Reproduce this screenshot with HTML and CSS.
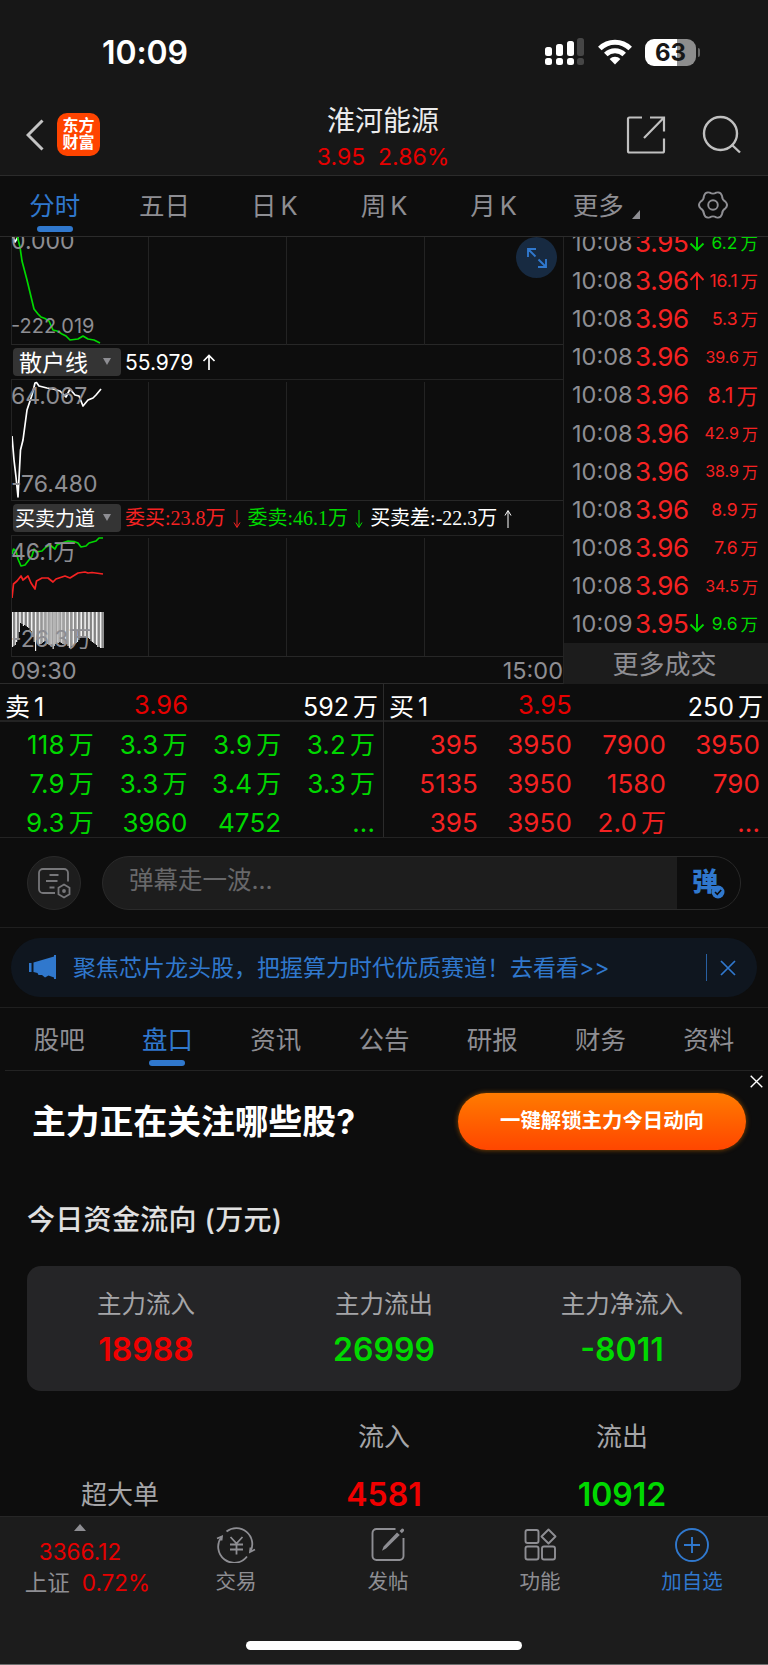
FILE: index.html
```html
<!DOCTYPE html>
<html lang="zh-CN">
<head>
  <meta charset="UTF-8">
  <meta name="viewport" content="width=device-width, initial-scale=1.0">
  <title>淮河能源</title>
  <link rel="stylesheet" href="styles.css">
</head>
<body>
  <!-- 状态栏 -->
  <div class="status">
    <span class="time">10:09</span>
    <svg class="signal" width="40" height="28" viewBox="0 0 40 28">
      <g fill="#fff">
        <rect x="0" y="9" width="7" height="9" rx="2.5"/><rect x="11" y="6" width="7" height="12" rx="2.5"/><rect x="22" y="3" width="7" height="15" rx="2.5"/>
        <rect x="0" y="20" width="7" height="7" rx="2.5"/><rect x="11" y="20" width="7" height="7" rx="2.5"/><rect x="22" y="20" width="7" height="7" rx="2.5"/>
      </g>
      <g fill="#464646"><rect x="32" y="0" width="7" height="18" rx="2.5"/><rect x="32" y="20" width="7" height="7" rx="2.5"/></g>
    </svg>
    <svg class="wifi" width="34" height="26" viewBox="0 0 34 26">
      <g fill="none" stroke="#fff" stroke-width="5">
        <path d="M1.8 9.5a21.5 21.5 0 0 1 30.4 0"/>
        <path d="M7.8 15.6a13 13 0 0 1 18.4 0"/>
      </g>
      <path d="M17 25.5l-5.4-5.6a7.6 7.6 0 0 1 10.8 0z" fill="#fff"/>
    </svg>
    <div class="battery">63</div>
  </div>

  <!-- 顶部标题 -->
  <header class="header">
    <svg class="back" width="18" height="32" viewBox="0 0 18 32"><path d="M16.500 1.500L2 16l14.500 14.500" fill="none" stroke="#c4c4c4" stroke-width="3"/></svg>
    <div class="logo">东方<br>财富</div>
    <div class="stock">
      <h1>淮河能源</h1>
      <p>3.95&nbsp; 2.86%</p>
    </div>
    <svg class="share" width="40" height="40" viewBox="0 0 40 40">
      <g fill="none" stroke="#c0c0c0" stroke-width="2.2">
        <path d="M16 2.500H3.500a1.500 1.500 0 0 0-1.500 1.500V36a1.500 1.500 0 0 0 1.500 1.500H36.500a1.500 1.500 0 0 0 1.500-1.500V23.500"/>
        <path d="M24 2.500h14v14M38 2.500L18 23"/>
      </g>
    </svg>
    <svg class="search" width="40" height="40" viewBox="0 0 40 40">
      <g fill="none" stroke="#c0c0c0" stroke-width="2.4"><circle cx="18.500" cy="18.500" r="16.500"/><path d="M29.500 29.500L38 37.500"/></g>
    </svg>
  </header>

  <!-- 周期切换 -->
  <nav class="tabs">
    <a class="active">分时</a>
    <a>五日</a>
    <a>日<i>K</i></a>
    <a>周<i>K</i></a>
    <a>月<i>K</i></a>
    <a class="more">更多<span class="corner"></span></a>
    <a>
      <svg width="30" height="30" viewBox="0 0 30 30"><g fill="none" stroke="#8e8e93" stroke-width="1.9"><path d="M27.400 11.700Q30.600 15 27.400 18.300Q24 20.200 24.050 24.050Q22.800 28.500 18.300 27.400Q15 25.400 11.700 27.400Q7.200 28.500 5.950 24.050Q6 20.200 2.600 18.300Q-.6 15 2.600 11.700Q6 9.800 5.950 5.950Q7.200 1.500 11.700 2.600Q15 4.600 18.300 2.600Q22.800 1.500 24.050 5.950Q24 9.800 27.400 11.700Z"/><circle cx="15" cy="15" r="4.800"/></g></svg>
    </a>
  </nav>

  <!-- 分时图和成交明细 -->
  <section class="quote">
    <div class="charts">
      <div class="panel p1">
        <svg width="551" height="108" viewBox="0 0 551 108">
          <path class="grid" d="M136.500 0V108M274.500 0V108M412.500 0V108"/>
          <path d="M1 0L3 5L6 0" class="line white"/>
          <path d="M5.500 0L8 10L10 24L15 43L22 72L26 77L29 80L33 81.500L37 84L41 93L45 94L50 97L54 99L58 103L66 102L71 99L76 102L82 103L88 106" class="line green"/>
        </svg>
        <span class="top">0.000</span>
        <span class="bottom">-222.019</span>
      </div>
      <div class="indicator">
        <b class="wide">散户线<i></i></b>
        <span class="val">55.979 <svg width="14" height="17" viewBox="0 0 14 17"><path d="M7 16V2M1.500 7L7 1.500L12.500 7" fill="none" stroke="#fff" stroke-width="1.700"/></svg></span>
      </div>
      <div class="panel p2">
        <svg width="551" height="120" viewBox="0 0 551 120">
          <path class="grid" d="M136.500 2V120M274.500 2V120M412.500 2V120"/>
          <path d="M0 56L2 80L4 97L6 117L8.500 70L11 60L15 30L20 15L23 3L24.500 2.500L27 6L35 8L41 9L48 11L54 17L58 9L63 15L67 16L71 26L76 20L81 18L84 15L89 9" class="line white"/>
        </svg>
        <span class="top">64.067</span>
        <span class="bottom">-76.480</span>
      </div>
      <div class="indicator serif">
        <b>买卖力道<i></i></b>
        <span class="red">委买:23.8万<svg width="8" height="20" viewBox="0 0 8 20"><path d="M4 1V18M1 13.500L4 18.500L7 13.500" fill="none" stroke="currentColor"/></svg></span>
        <span class="green">委卖:46.1万<svg width="8" height="20" viewBox="0 0 8 20"><path d="M4 1V18M1 13.500L4 18.500L7 13.500" fill="none" stroke="currentColor"/></svg></span>
        <span class="white">买卖差:-22.3万<svg width="8" height="20" viewBox="0 0 8 20"><path d="M4 19V2M1 6.500L4 1.500L7 6.500" fill="none" stroke="currentColor"/></svg></span>
      </div>
      <div class="panel p3">
        <svg id="force" width="551" height="120" viewBox="0 0 551 120">
          <path class="grid" d="M136.500 2V120M274.500 2V120M412.500 2V120"/>
          <path d="M0 18L1.500 13L4 15L6 23L9 30L13 29L20 20L22 13L24 16L30 15L34 11L38 9L43 13L45 9L50 7L56 5L62 5.500L66 7L69 11L74 10L77 7L84 5L87 2L91 2" class="line green"/>
          <path d="M0 62L1.500 48L5 45L9 40L11 44L16 40L19 47L23 53L24.500 45L30 42L36 42L41 46L44 43L53 40L58 42L66 37L73 36L76 37L80 36.500L91 38" class="line red"/>
        </svg>
        <span class="top">46.1万</span>
        <span class="bottom">-26.3万</span>
      </div>
      <div class="axis"><span>09:30</span><span>15:00</span></div>
    </div>
    <div class="trades">
      <ul id="ticks"></ul>
      <a class="more-trades">更多成交</a>
    </div>
    <div class="expand">
      <svg width="22" height="22" viewBox="0 0 22 22"><path d="M2 10V2H10M2 2L9.500 9.500M20 12V20H12M20 20L12.500 12.500" fill="none" stroke="#3078cd" stroke-width="1.900"/></svg>
    </div>
  </section>

  <!-- 买卖队列 -->
  <section class="book">
    <div class="side">
      <div class="level"><span>卖<i>1</i></span><span class="price">3.96</span><span>592<i>万</i></span></div>
      <div class="queue green">
        <span>118<i>万</i></span><span>3.3<i>万</i></span><span>3.9<i>万</i></span><span>3.2<i>万</i></span>
        <span>7.9<i>万</i></span><span>3.3<i>万</i></span><span>3.4<i>万</i></span><span>3.3<i>万</i></span>
        <span>9.3<i>万</i></span><span>3960</span><span>4752</span><span>...</span>
      </div>
    </div>
    <div class="side">
      <div class="level"><span>买<i>1</i></span><span class="price">3.95</span><span>250<i>万</i></span></div>
      <div class="queue red">
        <span>395</span><span>3950</span><span>7900</span><span>3950</span>
        <span>5135</span><span>3950</span><span>1580</span><span>790</span>
        <span>395</span><span>3950</span><span>2.0<i>万</i></span><span>...</span>
      </div>
    </div>
  </section>

  <!-- 弹幕 -->
  <section class="danmu">
    <div class="danmu-set">
      <svg width="34" height="32" viewBox="0 0 34 32">
        <g fill="none" stroke="#77777a" stroke-width="1.8">
          <path d="M18 26H6a4 4 0 0 1-4-4V6a4 4 0 0 1 4-4h21a4 4 0 0 1 4 4v8.500"/>
          <path d="M12.500 8h9M9 14h11.500M12.500 20.500h5"/>
          <path d="M27 17.500l5.500 3.200v6.600L27 30.500l-5.500-3.200v-6.600z"/><circle cx="27" cy="24" r="1"/>
        </g>
      </svg>
    </div>
    <div class="danmu-input">
      <span>弹幕走一波...</span>
      <div class="danmu-btn">弹<svg width="14" height="14" viewBox="0 0 14 14"><circle cx="7" cy="7" r="6.500" fill="#3078cd"/><path d="M4 7l2.300 2.300L10.200 5" fill="none" stroke="#0d0d0d" stroke-width="1.600"/></svg></div>
    </div>
  </section>

  <!-- 公告条 -->
  <section class="notice">
    <div class="notice-bar">
      <svg width="28" height="25" viewBox="0 0 28 25" fill="#3078cd"><path d="M1 8h2.500v9H1zM5.500 7.500L26 1.500V0h2v24h-2v-1.500L20.500 20.500 17 22.500 14 20H10.500l-1-2L5.500 17z"/></svg>
      <p>聚焦芯片龙头股，把握算力时代优质赛道！去看看&gt;&gt;</p>
      <span class="split"></span>
      <svg width="16" height="16" viewBox="0 0 16 16"><path d="M1 1l14 14M15 1L1 15" stroke="#3078cd" stroke-width="1.700"/></svg>
    </div>
  </section>

  <nav class="tabs sub">
    <a>股吧</a>
    <a class="active">盘口</a>
    <a>资讯</a>
    <a>公告</a>
    <a>研报</a>
    <a>财务</a>
    <a>资料</a>
  </nav>

  <!-- 广告 -->
  <section class="ad">
    <h2>主力正在关注哪些股?</h2>
    <a class="ad-btn">一键解锁主力今日动向</a>
    <div class="ad-close"><svg width="13" height="13" viewBox="0 0 13 13"><path d="M.7.7l11.600 11.600M12.300.7L.7 12.300" stroke="#fff" stroke-width="1.400"/></svg></div>
  </section>

  <!-- 资金流向 -->
  <section class="flow">
    <h3>今日资金流向 (万元)</h3>
    <div class="card">
      <div><p>主力流入</p><strong class="up">18988</strong></div>
      <div><p>主力流出</p><strong class="down">26999</strong></div>
      <div><p>主力净流入</p><strong class="down">-8011</strong></div>
    </div>
    <div class="detail">
      <span></span><span>流入</span><span>流出</span>
      <span class="name">超大单</span><strong class="up">4581</strong><strong class="down">10912</strong>
    </div>
  </section>

  <!-- 底部导航 -->
  <footer class="footer">
    <div class="index">
      <span class="tri"></span>
      <span class="num">3366.12</span>
      <span class="name">上证 <em>0.72%</em></span>
    </div>
    <a>
      <svg width="40" height="36" viewBox="0 0 40 36"><g fill="none" stroke="#8e8e93" stroke-width="1.800"><path d="M10.500 4.500A16 16 0 0 1 34.500 24.500M31 29.500A16 16 0 0 1 5.500 10"/><path d="M1 11.500l5-2-.5 4M39 22.500l-5 2.500.5-4.500M14.500 10l6 6.500 6-6.500M20.500 16.500v11M14 17.500h13M14 22.500h13"/></g></svg>
      交易
    </a>
    <a>
      <svg width="40" height="36" viewBox="0 0 40 36"><path d="M27.500 2H8.500a4 4 0 0 0-4 4v23a4 4 0 0 0 4 4h23a4 4 0 0 0 4-4V11" fill="none" stroke="#8e8e93" stroke-width="1.900"/><path d="M29 5.500l2.800 2.600L18 21.500l-4 2.300 1.600-4.300zM31.500 4l2.500-2.500q2.500 0 2 2.500l-2.200 2.300z" fill="#8e8e93"/></svg>
      发帖
    </a>
    <a>
      <svg width="40" height="36" viewBox="0 0 40 36"><g fill="none" stroke="#8e8e93" stroke-width="1.900"><rect x="5.500" y="3" width="13" height="13" rx="2"/><rect x="5.500" y="19.500" width="13" height="13" rx="2"/><rect x="22" y="19.500" width="13" height="13" rx="2"/><path d="M28.500 2.500l7 7-7 7-7-7z" stroke-linejoin="round"/></g></svg>
      功能
    </a>
    <a class="add">
      <svg width="40" height="36" viewBox="0 0 40 36"><g fill="none" stroke="#3078cd" stroke-width="1.900"><circle cx="20" cy="18" r="16"/><path d="M12 18h16M20 10v16"/></g></svg>
      加自选
    </a>
    <div class="home"></div>
  </footer>

  <script src="main.js"></script>
</body>
</html>
```
FILE: styles.css
```css
* {
  box-sizing: border-box;
}
body {
  margin: 0;
  width: 768px;
  height: 1665px;
  overflow: hidden;
  display: flex;
  flex-direction: column;
  background: #0d0d0d;
  color: #8e8e93;
  font-family: Inter, "Noto Sans CJK SC", sans-serif;
}
h1, h2, h3, p, ul {
  margin: 0;
  padding: 0;
  font-weight: 400;
  list-style: none;
}
i, em {
  font-style: normal;
}
svg {
  display: block;
  flex: none;
}
.red { color: #f52222; }
.green { color: #00d800; }
.white { color: #fff; }
.up { color: #f00000; }
.down { color: #00d800; }

/* 状态栏 */
.status {
  height: 104px;
  flex: none;
  display: flex;
  align-items: center;
  padding: 0 68px 0 102px;
  background: #171717;
}
.time {
  color: #fff;
  font-size: 32px;
  font-weight: 600;
  letter-spacing: -0.1px;
  margin-right: auto;
}
.wifi {
  margin: 0 13px 0 13px;
}
.battery {
  position: relative;
  width: 51px;
  height: 27px;
  margin-right: 4px;
  border-radius: 9px;
  background: linear-gradient(90deg, #fff 63%, #8d8d8d 63%);
  color: #171717;
  font-size: 24px;
  font-weight: 700;
  line-height: 27px;
  text-align: center;
}
.battery::after {
  content: "";
  position: absolute;
  right: -4px;
  top: 9px;
  width: 2.500px;
  height: 9px;
  border-radius: 0 3px 3px 0;
  background: #666;
}

/* 顶部标题 */
.header {
  position: relative;
  height: 72px;
  flex: none;
  display: flex;
  align-items: center;
  padding: 0 26px 10px;
  background: #171717;
  border-bottom: 1px solid #2b2b2b;
}
.back {
  margin-top: 1px;
}
.logo {
  width: 43px;
  height: 43px;
  margin-left: 13px;
  padding-top: 4px;
  border-radius: 10px;
  background: #ff4400;
  color: #fff;
  font-size: 16px;
  font-weight: 700;
  line-height: 17px;
  text-align: center;
}
.stock {
  flex: 1;
  padding-left: 40px;
  text-align: center;
}
.stock h1 {
  margin-top: 5px;
  color: #ebebeb;
  font-size: 28px;
  line-height: 40px;
}
.stock p {
  color: #e60000;
  font-size: 23px;
  line-height: 32px;
}
.share {
  margin-right: 36px;
}

/* 切换栏 */
.tabs {
  height: 61px;
  flex: none;
  display: flex;
  border-bottom: 1px solid #2b2b2b;
}
.tabs a {
  position: relative;
  flex: 0 0 calc(100% / 7);
  display: flex;
  justify-content: center;
  align-items: center;
  padding-bottom: 5px;
  font-size: 25.500px;
}
.tabs a i {
  margin-left: 4px;
  padding-top: 3px;
}
.tabs a.more {
  padding-right: 10px;
}
.tabs a svg {
  margin-top: 3px;
}
.tabs .active {
  color: #3078cd;
}
.tabs .active::after {
  content: "";
  position: absolute;
  left: 50%;
  bottom: 4px;
  width: 36px;
  height: 6px;
  margin-left: -18px;
  border-radius: 3px;
  background: #3078cd;
}
.corner {
  position: absolute;
  right: 18px;
  bottom: 17px;
  border-left: 8px solid transparent;
  border-bottom: 9px solid #8e8e93;
}

/* 分时图 */
.quote {
  position: relative;
  height: 447px;
  flex: none;
  display: flex;
  overflow: hidden;
}
.charts {
  width: 564px;
  padding-left: 11px;
  border-right: 1px solid #232323;
  border-bottom: 1px solid #2b2b2b;
}
.panel {
  position: relative;
  border-left: 1px solid #232323;
  border-bottom: 1px solid #272727;
  height: 121px;
}
.p1 {
  height: 108px;
}
.panel svg {
  position: relative;
}
.panel span {
  position: absolute;
  left: -1px;
  font-size: 23px;
  line-height: 24px;
}
.p1 .top { top: -8px; }
.p1 .bottom { top: 77px; font-size: 20px; }
.p2 .top { top: 4px; }
.p2 .bottom { top: 92px; }
.p3 .top { top: 4px; }
.p3 .bottom { top: 91px; }
.grid {
  fill: none;
  stroke: #232323;
  stroke-width: 1;
}
.line {
  fill: none;
  stroke: currentColor;
  stroke-width: 1.700;
  stroke-linejoin: round;
}
.indicator {
  height: 35px;
  display: flex;
  align-items: center;
  padding-left: 2px;
  border-bottom: 1px solid #232323;
  white-space: nowrap;
}
.indicator b {
  width: 108px;
  height: 28px;
  margin-right: 4px;
  display: flex;
  align-items: center;
  justify-content: space-between;
  padding: 0 10px 2px 2px;
  border-radius: 4px;
  background: #343434;
  color: #fff;
  font-size: 20px;
  font-weight: 400;
}
.indicator b.wide {
  padding-left: 6px;
  font-size: 23px;
}
.indicator b i {
  border: 4px solid transparent;
  border-top: 7px solid #8e8e93;
  border-bottom: 0;
}
.val {
  display: flex;
  align-items: center;
  gap: 9px;
  color: #fff;
  font-size: 21px;
}
.serif span {
  display: flex;
  align-items: center;
  padding-bottom: 3px;
  font-family: "Liberation Serif", "Noto Sans CJK SC", serif;
  font-size: 20px;
}
.serif span svg {
  margin: 4px 7px 0 7px;
}
.axis {
  display: flex;
  justify-content: space-between;
  font-size: 23.500px;
  line-height: 28px;
}

/* 放大按钮 */
.expand {
  position: absolute;
  left: 516px;
  top: 0;
  width: 41px;
  height: 41px;
  display: flex;
  align-items: center;
  justify-content: center;
  border-radius: 50%;
  background: #172a41;
}

/* 成交明细 */
.trades {
  flex: 1;
  display: flex;
  flex-direction: column;
}
.trades ul {
  height: 406px;
  display: flex;
  flex-direction: column;
  justify-content: flex-end;
}
.trades li {
  height: 38.180px;
  flex: none;
  display: flex;
  align-items: center;
  padding: 0 10px 0 8px;
}
.trades .t {
  width: 63px;
  font-size: 23.500px;
}
.trades .p {
  width: 54px;
  font-size: 26px;
  letter-spacing: -0.3px;
}
.trades .v {
  flex: 1;
  display: flex;
  justify-content: flex-end;
  align-items: center;
  font-size: 17.500px;
}
.trades .v i {
  margin-left: 3px;
}
.trades .v.s { font-size: 16px; }
.trades .v.l { font-size: 21.500px; }
.trades .arrow {
  margin-right: -16px;
}
.more-trades {
  flex: 1;
  background: #1c1c1c;
  font-size: 26px;
  line-height: 44px;
  padding-right: 3px;
  text-align: center;
}

/* 买卖队列 */
.book {
  height: 154px;
  flex: none;
  display: flex;
  font-size: 26px;
  border-bottom: 1px solid #232323;
}
.side {
  width: 384px;
}
.side:first-child {
  border-right: 1px solid #2b2b2b;
}
.side i {
  margin-left: 4px;
  font-size: 25px;
}
.level {
  height: 38px;
  display: flex;
  align-items: center;
  padding: 5px 5px 0;
  color: #fff;
  font-size: 25px;
  border-bottom: 2px solid #232323;
}
.level span:first-child {
  width: 129px;
}
.level span:last-child {
  flex: 1;
  text-align: right;
}
.level .price {
  color: #e60000;
  font-size: 25.500px;
}
.queue {
  display: grid;
  grid-template-columns: repeat(4, 1fr);
  grid-auto-rows: 39px;
  padding-top: 3px;
  padding-right: 8px;
  letter-spacing: 0.1px;
  line-height: 39px;
  text-align: right;
}

/* 弹幕 */
.danmu {
  height: 90px;
  flex: none;
  display: flex;
  align-items: center;
  justify-content: space-between;
  padding: 0 27px;
  border-bottom: 1px solid #1f1f1f;
}
.danmu-set {
  width: 54px;
  height: 54px;
  display: flex;
  align-items: center;
  justify-content: center;
  border-radius: 50%;
  border: 1px solid #2a2a2a;
  background: #1d1d1d;
}
.danmu-input {
  width: 639px;
  height: 54px;
  display: flex;
  align-items: center;
  overflow: hidden;
  border-radius: 27px;
  border: 1px solid #2a2a2a;
  background: #1d1d1d;
  color: #68686a;
  font-size: 24.500px;
}
.danmu-input span {
  flex: 1;
  padding: 0 0 8px 26px;
}
.danmu-btn {
  position: relative;
  width: 63px;
  height: 54px;
  padding-left: 15px;
  background: #0d0d0d;
  color: #3078cd;
  font-size: 26px;
  font-weight: 900;
  line-height: 52px;
}
.danmu-btn svg {
  position: absolute;
  left: 34px;
  top: 29px;
}

/* 公告条 */
.notice {
  height: 80px;
  flex: none;
  padding: 10px 11px;
  border-bottom: 1px solid #1f1f1f;
}
.notice-bar {
  height: 59px;
  display: flex;
  align-items: center;
  padding: 0 21px 0 17px;
  border-radius: 30px;
  background: #0f161f;
  color: #3078cd;
  font-size: 23px;
}
.notice-bar p {
  flex: 1;
  padding: 0 0 3px 17px;
  white-space: nowrap;
}
.split {
  width: 1.500px;
  height: 27px;
  margin-right: 13px;
  background: #2860a2;
}
.sub {
  height: 63px;
  margin: 0 5px;
  border-color: #232323;
}
.sub a {
  padding-bottom: 3px;
}

/* 广告 */
.ad {
  position: relative;
  height: 101px;
  flex: none;
  display: flex;
  justify-content: space-between;
  align-items: center;
  padding: 0 22px 0 32px;
}
.ad h2 {
  padding-bottom: 4px;
  color: #fff;
  font-size: 33.800px;
  font-weight: 700;
}
.ad-btn {
  width: 288px;
  height: 57px;
  border-radius: 29px;
  background: linear-gradient(#ff7b00, #ff4600);
  box-shadow: 0 0 5px #8a4a00;
  color: #fff;
  font-size: 20.400px;
  font-weight: 700;
  line-height: 55px;
  text-align: center;
}
.ad-close {
  position: absolute;
  right: 0;
  top: 0;
  padding: 4px 5px 15px 12px;
}

/* 资金流向 */
.flow {
  height: 344px;
  flex: none;
  padding: 27px 27px 0;
}
.flow h3 {
  color: #e0e0e0;
  font-size: 28px;
  font-weight: 500;
  letter-spacing: 0.3px;
  line-height: 42px;
}
.card {
  height: 125px;
  margin-top: 25px;
  padding-top: 20px;
  display: flex;
  border-radius: 14px;
  background: #252527;
  text-align: center;
}
.card div {
  flex: 1;
}
.card p {
  color: #a5a5a8;
  font-size: 24.500px;
  line-height: 36px;
}
.flow strong {
  font-size: 32px;
  font-weight: 600;
  line-height: 56px;
}
.detail {
  display: grid;
  grid-template-columns: repeat(3, 1fr);
  grid-auto-rows: 58px;
  padding-top: 17px;
  color: #a5a5a8;
  font-size: 26px;
  line-height: 57px;
  text-align: center;
}
.detail strong {
  line-height: 57px;
}
.detail .name {
  padding-right: 52px;
}

/* 底部导航 */
.footer {
  position: relative;
  flex: 1;
  display: flex;
  align-items: flex-start;
  background: #1c1c1c;
  border-top: 1px solid #262626;
  border-bottom: 1px solid #6e6e6e;
  font-size: 20.500px;
}
.index {
  width: 160px;
  padding-top: 7px;
  display: flex;
  flex-direction: column;
  align-items: center;
}
.tri {
  border: 6px solid transparent;
  border-top: 0;
  border-bottom: 7px solid #8e8e93;
}
.index .num {
  margin-top: 5px;
  color: #e60000;
  font-size: 22.500px;
  line-height: 31px;
}
.index .name {
  display: flex;
  gap: 12px;
  padding-left: 15px;
  font-size: 22.500px;
  line-height: 31px;
}
.index em {
  color: #e60000;
}
.footer a {
  width: 152px;
  padding-top: 10px;
  display: flex;
  flex-direction: column;
  align-items: center;
  line-height: 37px;
}
.footer .add {
  color: #3078cd;
}
.home {
  position: absolute;
  left: 246px;
  bottom: 14px;
  width: 276px;
  height: 9px;
  border-radius: 5px;
  background: #fff;
}
```
FILE: main.js
```js
// 成交明细：时间、价格、成交量（万）、方向、字号
const trades = [
  ['10:08', '3.95', '6.2', 'down', ''],
  ['10:08', '3.96', '16.1', 'up', ''],
  ['10:08', '3.96', '5.3', '', ''],
  ['10:08', '3.96', '39.6', '', 's'],
  ['10:08', '3.96', '8.1', '', 'l'],
  ['10:08', '3.96', '42.9', '', 's'],
  ['10:08', '3.96', '38.9', '', 's'],
  ['10:08', '3.96', '8.9', '', ''],
  ['10:08', '3.96', '7.6', '', ''],
  ['10:08', '3.96', '34.5', '', 's'],
  ['10:09', '3.95', '9.6', 'down', '']
];
const arrows = {
  up: '<path d="M8 19V2M1.500 9L8 2L14.500 9"/>',
  down: '<path d="M8 0V17M1.500 10.500L8 17L14.500 10.500"/>'
};

document.getElementById('ticks').innerHTML = trades.map(([time, price, vol, dir, size]) => {
  const color = dir === 'down' ? 'green' : 'red';
  const arrow = dir
    ? `<svg class="arrow ${color}" width="16" height="19" viewBox="0 0 16 19" fill="none" stroke="currentColor" stroke-width="1.9">${arrows[dir]}</svg>`
    : '';
  return `<li><span class="t">${time}</span><span class="p red">${price}</span>${arrow}<span class="v ${color} ${size}">${vol}<i>万</i></span></li>`;
}).join('');

// 买卖力道柱状图
const depth = [35, 34, 33, 30, 26, 20, 11, 12, 14, 13, 14, 15, 16, 18, 19, 25, 30, 39, 28, 32, 32, 32, 31, 30, 29, 30, 32, 33, 34, 33, 37, 34, 32, 31, 31, 30, 31, 32, 32, 33, 32, 34, 36, 36, 34, 33, 32, 31, 30, 28, 26, 25, 24, 25, 24, 25, 26, 27, 29, 30, 31, 32, 33, 35, 35, 36, 36, 36];
let bars = '';
depth.forEach((h, i) => {
  const color = i % 3 === 1 ? '#b4b4b4' : '#f2f2f2';
  bars += `<rect x="${(i * 1.353).toFixed(2)}" y="76" width="1.15" height="${h}" fill="${color}"/>`;
});
document.getElementById('force').insertAdjacentHTML('beforeend', bars);
```
